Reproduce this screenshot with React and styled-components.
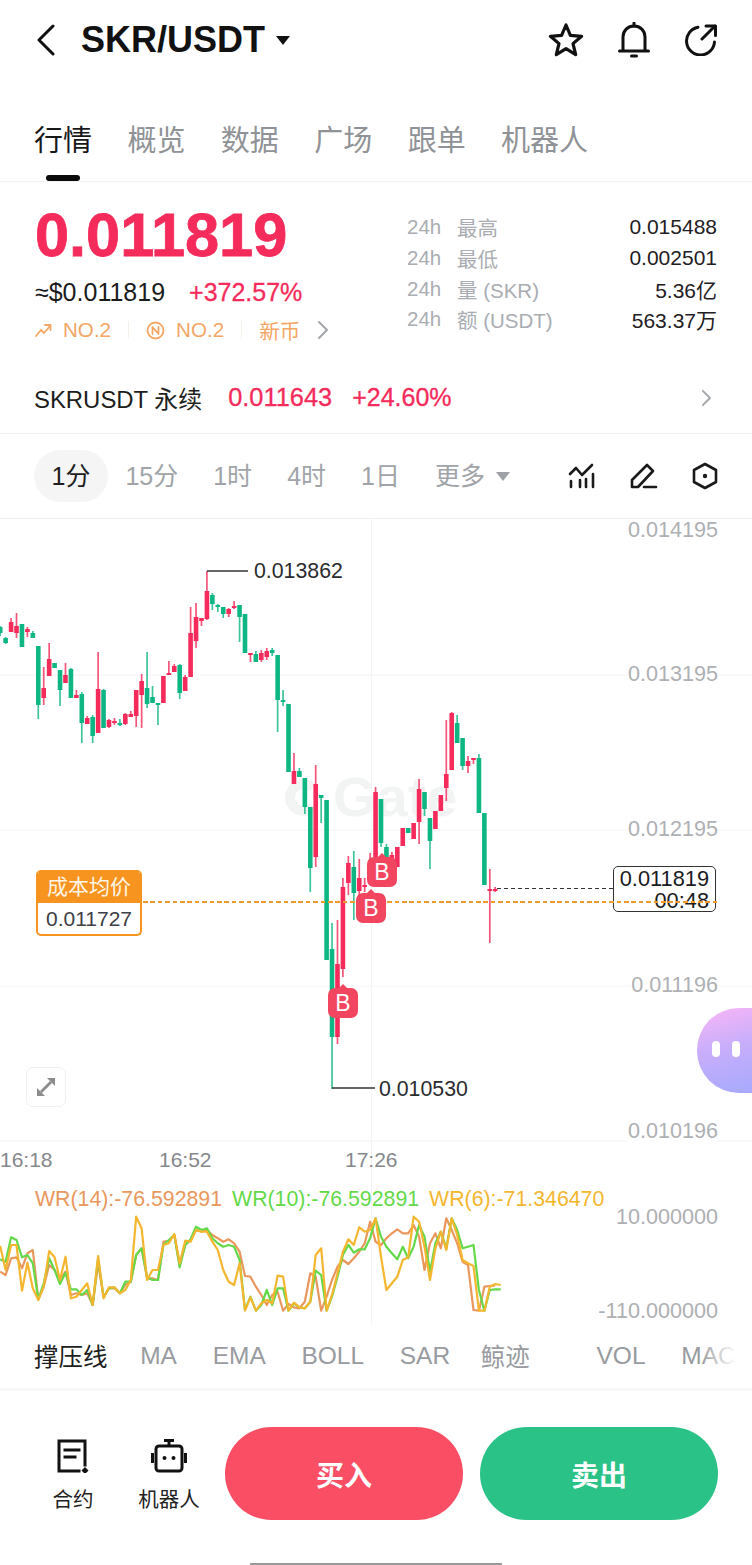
// App.jsx
import React from 'react';
import styled, { createGlobalStyle } from 'styled-components';

const FONT = '"Liberation Sans", "Noto Sans CJK SC", sans-serif';
const RED = '#f42b5b';
const GREEN = '#0db683';
const CHART_TOP = 519;

const GlobalStyle = createGlobalStyle`
  html, body {
    margin: 0;
    padding: 0;
    background: #fff;
    font-family: ${FONT};
  }
`;

const Page = styled.div`
  width: 752px;
  height: 1565px;
  overflow: hidden;
  background: #fff;
  color: #1b1b1d;
`;

/* header */
const Header = styled.header`
  height: 80px;
  display: flex;
  align-items: center;
  padding: 0 34px 0 36px;
  box-sizing: border-box;
`;

const Title = styled.h1`
  margin: 0 0 0 25px;
  font-size: 36px;
  font-weight: 700;
  line-height: 40px;
  color: #111;
`;

const TitleCaret = styled.span`
  width: 0;
  height: 0;
  margin: 0 0 0 11px;
  border-left: 7.5px solid transparent;
  border-right: 7.5px solid transparent;
  border-top: 9px solid #111;
`;

const HeaderIcons = styled.div`
  margin-left: auto;
  display: flex;
  align-items: center;
  gap: 34px;
`;

/* tabs */
const Tabs = styled.nav`
  height: 102px;
  display: flex;
  align-items: flex-start;
  gap: 35.4px;
  padding: 43px 0 0 34px;
  box-sizing: border-box;
  border-bottom: 1px solid #f2f2f2;
`;

const Tab = styled.div`
  position: relative;
  font-size: 29px;
  line-height: 36px;
  color: ${(p) => (p.$active ? '#17181a' : '#8f9296')};

  ${(p) =>
    p.$active &&
    `&::after {
      content: '';
      position: absolute;
      left: 12px;
      top: 52px;
      width: 34px;
      height: 6px;
      border-radius: 3px;
      background: #0b0b0b;
    }`}
`;

/* price summary */
const Summary = styled.section`
  height: 184px;
  display: flex;
  justify-content: space-between;
  padding: 23px 35px 0 35px;
  box-sizing: border-box;
`;

const PriceColumn = styled.div`
  display: flex;
  flex-direction: column;
`;

const Price = styled.div`
  font-size: 61.3px;
  font-weight: 700;
  line-height: 60px;
  color: ${RED};
  -webkit-text-stroke: 0.8px ${RED};
`;

const SubPrice = styled.div`
  display: flex;
  gap: 24px;
  margin-top: 12px;
  font-size: 25px;
  line-height: 30px;
`;

const Change = styled.span`
  color: ${RED};
  font-size: ${(p) => p.$size || 25}px;
  margin-left: ${(p) => p.$gap || 0}px;
  -webkit-text-stroke: 0.3px ${RED};
`;

const TagRow = styled.div`
  display: flex;
  align-items: center;
  margin-top: 8px;
  height: 30px;
  color: #f4a665;
  font-size: 20.6px;
`;

const Tag = styled.span`
  display: flex;
  align-items: center;
  gap: 11px;
`;

const TagDivider = styled.span`
  width: 1px;
  height: 18px;
  margin: 0 17px;
  background: #f6f0ea;
`;

const TagChevron = styled.span`
  display: flex;
  margin-left: 17px;
`;

const Stats = styled.div`
  width: 310px;
  margin-top: 7px;
  display: flex;
  flex-direction: column;
`;

const StatRow = styled.div`
  height: 30.7px;
  display: flex;
  align-items: center;
  font-size: 20.5px;
  color: #a9adb2;
`;

const StatSpan = styled.span`
  width: 50px;
`;

const StatValue = styled.span`
  margin-left: auto;
  color: #1f2023;
  font-size: 21px;
`;

/* perpetual row */
const PerpRow = styled.div`
  height: 68px;
  display: flex;
  align-items: center;
  padding: 0 40px 4px 34px;
  box-sizing: border-box;
  border-bottom: 1px solid #f3f3f3;
`;

const PerpName = styled.span`
  font-size: 23.9px;
  color: #1d1e20;
  margin-right: 26px;
`;

const PerpChevron = styled.span`
  margin-left: auto;
  display: flex;
`;

/* intervals */
const IntervalBar = styled.div`
  height: 85px;
  display: flex;
  align-items: center;
  padding: 0 34px;
  box-sizing: border-box;
  border-bottom: 1px solid #f0f0f0;
`;

const Interval = styled.div`
  height: 52px;
  line-height: 52px;
  padding: 0 17.5px;
  border-radius: 26px;
  font-size: 25px;
  color: ${(p) => (p.$active ? '#1d1e20' : '#a0a4a8')};
  background: ${(p) => (p.$active ? '#f5f5f5' : 'transparent')};
`;

const MoreCaret = styled.span`
  width: 0;
  height: 0;
  margin-left: -6px;
  border-left: 7px solid transparent;
  border-right: 7px solid transparent;
  border-top: 9px solid #9ea2a6;
`;

const ChartTools = styled.div`
  margin-left: auto;
  display: flex;
  align-items: center;
  gap: 34px;
`;

/* chart */
const Chart = styled.div`
  position: relative;
  isolation: isolate;
  height: 806px;
  overflow: hidden;
`;

const ChartSvg = styled.svg`
  display: block;
`;

const Watermark = styled.div`
  position: absolute;
  left: 285px;
  top: ${770 - CHART_TOP}px;
  z-index: -1;
  display: flex;
  align-items: center;
  gap: 11px;
  font-size: 56px;
  font-weight: 700;
  line-height: 54px;
  color: #f2f4f3;
`;

const WatermarkRing = styled.span`
  width: 37px;
  height: 37px;
  box-sizing: border-box;
  border: 10px solid #f2f4f3;
  border-right-color: transparent;
  border-radius: 50%;
`;

const AxisLabel = styled.span`
  position: absolute;
  right: 34px;
  top: ${(p) => p.$y - CHART_TOP - 11}px;
  font-size: 21.6px;
  line-height: 22px;
  color: #aeb0b3;
  background: ${(p) => (p.$plain ? 'transparent' : '#fff')};
`;

const TimeLabel = styled.span`
  position: absolute;
  left: ${(p) => p.$x}px;
  top: ${1160 - CHART_TOP - 12}px;
  font-size: 21px;
  line-height: 24px;
  color: #85888c;
`;

const Extreme = styled.span`
  position: absolute;
  left: ${(p) => p.$x}px;
  top: ${(p) => p.$y - CHART_TOP - 12}px;
  font-size: 21.3px;
  line-height: 24px;
  color: #2a2b2e;
`;

const WrLegend = styled.div`
  position: absolute;
  left: 35px;
  top: ${1199 - CHART_TOP - 12}px;
  display: flex;
  gap: 10px;
  font-size: 21.3px;
  line-height: 24px;
`;

const WrItem = styled.span`
  color: ${(p) => p.$color};
`;

const CostTag = styled.div`
  position: absolute;
  left: 36px;
  top: ${870 - CHART_TOP}px;
  width: 106px;
  height: 66px;
  box-sizing: border-box;
  border: 2.5px solid #f7941f;
  border-top: 0;
  border-radius: 5px;
  background: #fff;
  text-align: center;
  overflow: hidden;
`;

const CostTitle = styled.div`
  height: 33px;
  line-height: 33px;
  background: #f7941f;
  color: #fff6e8;
  font-size: 21px;
`;

const CostValue = styled.div`
  line-height: 31px;
  font-size: 21px;
  color: #3d4046;
`;

const PriceBox = styled.div`
  position: absolute;
  left: 613px;
  top: ${866 - CHART_TOP}px;
  width: 103px;
  height: 46px;
  box-sizing: border-box;
  padding: 1px 6px 0 0;
  border: 1.5px solid #333;
  border-radius: 5px;
  background: #fff;
  text-align: right;
  font-size: 21.8px;
  line-height: 22px;
  color: #1b1b1d;
`;

const CostLine = styled.div`
  position: absolute;
  left: 143px;
  width: 575px;
  top: ${901 - CHART_TOP}px;
  height: 2px;
  background: repeating-linear-gradient(to right, #f09a2e 0 4.5px, transparent 4.5px 7.4px);
`;

const Badge = styled.div`
  position: absolute;
  left: ${(p) => p.$x}px;
  top: ${(p) => p.$y - CHART_TOP}px;
  width: 30px;
  height: 30px;
  border-radius: 7px;
  background: #f2455f;
  color: #fff;
  text-align: center;
  font-size: 23px;
  line-height: 30px;

  &::before {
    content: '';
    position: absolute;
    left: 11px;
    top: -4px;
    border-left: 4px solid transparent;
    border-right: 4px solid transparent;
    border-bottom: 4px solid #f2455f;
  }
`;

const ExpandButton = styled.div`
  position: absolute;
  left: 26px;
  top: ${1067 - CHART_TOP}px;
  width: 40px;
  height: 40px;
  box-sizing: border-box;
  display: flex;
  align-items: center;
  justify-content: center;
  border: 1.5px solid #f0f0f0;
  border-radius: 7px;
  background: #fff;
`;

const Assistant = styled.div`
  position: absolute;
  left: 697px;
  top: ${1008 - CHART_TOP}px;
  width: 70px;
  height: 85px;
  border-radius: 42px 0 0 42px;
  background: linear-gradient(165deg, #fbb6f6 0%, #c8aefb 45%, #a4a9fd 100%);
  display: flex;
  gap: 12px;
  padding: 33px 0 0 15px;
  box-sizing: border-box;
`;

const AssistantEye = styled.span`
  width: 8px;
  height: 16px;
  border-radius: 4px;
  background: #fff;
`;

/* indicators */
const IndicatorBar = styled.div`
  position: relative;
  height: 66px;
  display: flex;
  align-items: center;
  gap: 35.7px;
  padding: 0 0 2px 34px;
  box-sizing: border-box;
  border-bottom: 3px solid #f8f8f8;
  overflow: hidden;

  &::after {
    content: '';
    position: absolute;
    left: 700px;
    top: 0;
    width: 52px;
    height: 100%;
    background: linear-gradient(to right, rgba(255, 255, 255, 0), #fff 70%);
  }
`;

const Indicator = styled.span`
  font-size: 24.5px;
  white-space: nowrap;
  color: ${(p) => (p.$active ? '#1d1e20' : '#989b9f')};
  margin-left: ${(p) => p.$gap || 0}px;
`;

/* bottom actions */
const ActionBar = styled.div`
  display: flex;
  padding: 36px 34px 0 38px;
`;

const Tool = styled.div`
  width: 70px;
  margin-right: 26px;
  padding-top: 12px;
  display: flex;
  flex-direction: column;
  align-items: center;
  white-space: nowrap;
  font-size: 20.5px;
  line-height: 26px;
  color: #222;

  svg {
    margin-bottom: 14px;
  }
`;

const TradeButton = styled.button`
  width: 238px;
  height: 93px;
  border: 0;
  border-radius: 47px;
  background: ${(p) => p.$color};
  color: #fff;
  font-family: ${FONT};
  font-size: 28px;
  font-weight: 700;
  margin-left: ${(p) => p.$gap || 0}px;
`;

const HomeBar = styled.div`
  width: 252px;
  height: 2px;
  margin: 43px auto 0;
  background: #999;
`;

// [colour, wick top, wick bottom, body top, body bottom] in page y
const CANDLES = [
  ['g', 626, 636, 627, 633], ['g', 637, 644, 638, 643], ['r', 618, 632, 622, 632], ['r', 613, 638, 626, 633],
  ['g', 624, 647, 624, 647], ['r', 627, 637, 629, 632], ['g', 631, 638, 633, 638], ['g', 646, 719, 646, 705],
  ['r', 667, 705, 688, 698], ['r', 643, 676, 659, 676], ['g', 663, 668, 663, 668], ['g', 670, 706, 670, 690],
  ['r', 663, 683, 675, 683], ['g', 668, 698, 669, 698], ['r', 690, 698, 695, 698], ['g', 692, 743, 694, 723],
  ['r', 716, 724, 718, 724], ['g', 715, 743, 717, 736], ['r', 652, 733, 689, 733], ['g', 689, 728, 690, 728],
  ['r', 719, 728, 720, 727], ['r', 718, 725, 721, 723], ['g', 719, 726, 723, 725], ['r', 713, 725, 714, 724],
  ['r', 711, 717, 714, 717], ['r', 690, 727, 690, 716], ['r', 674, 728, 681, 695], ['g', 652, 708, 688, 704],
  ['g', 686, 703, 697, 703], ['g', 703, 725, 703, 704], ['r', 676, 703, 676, 703], ['r', 661, 674, 673, 674],
  ['r', 664, 672, 666, 672], ['g', 664, 699, 665, 693], ['r', 675, 691, 677, 691], ['r', 607, 677, 633, 677],
  ['r', 603, 648, 617, 641], ['r', 618, 626, 618, 621], ['r', 571, 620, 591, 619], ['g', 593, 610, 595, 604],
  ['g', 604, 612, 605, 607], ['g', 607, 618, 607, 614], ['r', 608, 617, 609, 614], ['r', 601, 609, 606, 608],
  ['g', 605, 642, 605, 617], ['g', 614, 653, 614, 653], ['r', 653, 662, 653, 655], ['g', 651, 662, 654, 662],
  ['r', 650, 662, 653, 660], ['r', 648, 660, 651, 657], ['g', 648, 656, 650, 653], ['g', 655, 732, 655, 700],
  ['g', 690, 706, 700, 702], ['g', 704, 772, 704, 772], ['r', 753, 784, 771, 784], ['g', 768, 777, 771, 777],
  ['g', 778, 814, 778, 807], ['g', 807, 892, 807, 868], ['r', 765, 867, 784, 857], ['g', 795, 823, 795, 798],
  ['g', 800, 960, 800, 960], ['g', 923, 1089, 949, 1037], ['r', 920, 1044, 964, 1037], ['r', 878, 977, 887, 969],
  ['r', 856, 895, 863, 883], ['g', 851, 920, 867, 893], ['r', 859, 900, 878, 891], ['r', 878, 892, 885, 887],
  ['r', 853, 885, 875, 880], ['r', 787, 857, 792, 857], ['g', 799, 847, 799, 843], ['g', 844, 870, 847, 858],
  ['r', 852, 868, 855, 866], ['r', 847, 867, 847, 867], ['r', 828, 846, 828, 846], ['g', 828, 833, 828, 833],
  ['r', 823, 839, 823, 839], ['r', 779, 844, 789, 822], ['g', 792, 816, 792, 809], ['g', 818, 869, 818, 841],
  ['r', 811, 829, 811, 829], ['r', 795, 811, 795, 811], ['r', 720, 801, 774, 788], ['r', 712, 770, 713, 770],
  ['g', 715, 743, 723, 743], ['g', 738, 770, 738, 766], ['r', 756, 773, 761, 766], ['r', 758, 764, 758, 760],
  ['g', 754, 813, 758, 813], ['g', 813, 885, 813, 885], ['r', 869, 943, 889, 891], ['r', 887, 892, 889, 890],
];

// WR lines, y in 1/3 px above page y 1180
const WR14 = [275, 285, 235, 232, 265, 220, 210, 358, 320, 255, 270, 300, 275, 345, 340, 345, 340, 375, 250, 352, 325, 325, 340, 315, 305, 225, 205, 295, 295, 300, 185, 183, 165, 255, 195, 180, 150, 155, 150, 165, 175, 185, 178, 190, 215, 288, 290, 320, 345, 375, 345, 335, 392, 372, 382, 385, 365, 280, 290, 392, 350, 300, 260, 240, 252, 235, 215, 190, 125, 185, 195, 175, 160, 148, 160, 160, 135, 170, 270, 190, 160, 205, 115, 150, 190, 245, 255, 390, 392, 320, 318, 316];
const WR10 = [238, 245, 172, 180, 232, 225, 250, 358, 310, 235, 270, 312, 278, 328, 328, 345, 330, 375, 235, 352, 325, 322, 340, 305, 305, 225, 205, 292, 300, 300, 195, 180, 165, 262, 195, 178, 140, 150, 145, 175, 190, 200, 195, 200, 240, 390, 350, 392, 375, 330, 375, 325, 325, 392, 370, 382, 385, 365, 272, 285, 392, 350, 290, 225, 195, 218, 208, 208, 175, 115, 170, 200, 220, 238, 200, 235, 200, 135, 170, 275, 190, 155, 205, 115, 150, 205, 200, 195, 330, 392, 330, 328, 328];
const WR6 = [198, 270, 195, 195, 332, 248, 325, 360, 320, 213, 232, 300, 230, 355, 350, 330, 310, 375, 228, 355, 322, 322, 340, 330, 300, 110, 145, 300, 270, 270, 195, 190, 162, 250, 182, 185, 150, 155, 155, 185, 210, 270, 305, 315, 250, 392, 352, 392, 370, 360, 370, 287, 290, 392, 368, 382, 385, 365, 225, 205, 392, 345, 280, 215, 178, 195, 142, 155, 150, 115, 230, 330, 310, 290, 240, 232, 110, 125, 200, 300, 205, 155, 210, 115, 165, 240, 250, 258, 392, 392, 320, 312, 315];

const candleX = (i) => 0.2 + 5.44 * i;
const wrPoints = (values) => values.map((v, i) => `${candleX(i).toFixed(1)},${(1180 + v / 3).toFixed(1)}`).join(' ');

const CandleChart = () => (
  <ChartSvg width="752" height="806" viewBox={`0 ${CHART_TOP} 752 806`}>
    <g stroke="#f4f4f4" strokeWidth="1">
      <line x1="0" y1="675" x2="752" y2="675" />
      <line x1="0" y1="830" x2="752" y2="830" />
      <line x1="0" y1="986" x2="752" y2="986" />
      <line x1="0" y1="1141" x2="752" y2="1141" />
      <line x1="371.5" y1="519" x2="371.5" y2="1325" />
    </g>
    {CANDLES.map(([c, wt, wb, bt, bb], i) => {
      const x = candleX(i);
      const color = c === 'g' ? GREEN : RED;
      return (
        <g key={i}>
          <line x1={x} y1={wt} x2={x} y2={wb} stroke={color} strokeWidth="1.7" opacity="0.8" />
          <rect x={x - 2.3} y={bt} width="4.6" height={Math.max(bb - bt, 2)} fill={color} />
        </g>
      );
    })}
    <polyline points="207,571 248,571" fill="none" stroke="#333" strokeWidth="1.4" />
    <polyline points="332,1088 375,1088" fill="none" stroke="#333" strokeWidth="1.4" />
    <line x1="497" y1="888.5" x2="613" y2="888.5" stroke="#333" strokeWidth="1" strokeDasharray="4 3" />
    <polyline points={wrPoints(WR14)} fill="none" stroke="#e9975c" strokeWidth="2.2" strokeLinejoin="round" />
    <polyline points={wrPoints(WR10)} fill="none" stroke="#63d94a" strokeWidth="2.2" strokeLinejoin="round" />
    <polyline points={wrPoints(WR6)} fill="none" stroke="#f4b62f" strokeWidth="2.2" strokeLinejoin="round" />
  </ChartSvg>
);

const BackIcon = () => (
  <svg width="20" height="32" viewBox="0 0 20 32" fill="none" stroke="#111" strokeWidth="3" strokeLinecap="round" strokeLinejoin="round">
    <polyline points="17,2 3,16 17,30" />
  </svg>
);

const StarIcon = () => (
  <svg width="36" height="36" viewBox="0 0 36 36" fill="none" stroke="#111" strokeWidth="3.2" strokeLinejoin="round">
    <polygon points="18,3 22.4,13.4 33.6,14.3 25,21.6 27.7,32.6 18,26.7 8.3,32.6 11,21.6 2.4,14.3 13.6,13.4" />
  </svg>
);

const BellIcon = () => (
  <svg width="32" height="36" viewBox="0 0 32 36" fill="none" stroke="#111" strokeWidth="3" strokeLinecap="round">
    <path d="M5 28V15C5 8.5 9.8 4 16 4s11 4.5 11 11v13" />
    <path d="M1.5 29h29" />
    <path d="M16 1v3" />
    <path d="M13.5 34h5" />
  </svg>
);

const ShareIcon = () => (
  <svg width="34" height="32" viewBox="0 0 34 32" fill="none" stroke="#111" strokeWidth="3" strokeLinecap="round" strokeLinejoin="round">
    <path d="M14 3.2A14 14 0 1 0 30.5 18" />
    <path d="M18 15L31 2" />
    <path d="M22 2h9.5v9.5" />
  </svg>
);

const TrendIcon = () => (
  <svg width="17" height="15" viewBox="0 0 17 15" fill="none" stroke="#f4a665" strokeWidth="1.8" strokeLinecap="round" strokeLinejoin="round">
    <polyline points="1,13 6,7 9,10 15,3" />
    <polyline points="10,2 15.5,2 15.5,7" />
  </svg>
);

const NewIcon = () => (
  <svg width="19" height="19" viewBox="0 0 19 19" fill="none" stroke="#f4a665" strokeWidth="1.8" strokeLinecap="round" strokeLinejoin="round">
    <circle cx="9.5" cy="9.5" r="8" />
    <path d="M6.5 13V6l6 7V6" />
  </svg>
);

const Chevron = ({ color, size = 20 }) => (
  <svg width={size * 0.6} height={size} viewBox="0 0 12 20" fill="none" stroke={color} strokeWidth="2" strokeLinecap="round" strokeLinejoin="round">
    <polyline points="2,2 10,10 2,18" />
  </svg>
);

const LinesIcon = () => (
  <svg width="28" height="26" viewBox="0 0 28 26" fill="none" stroke="#1a1a1a" strokeWidth="2.6" strokeLinecap="round" strokeLinejoin="round">
    <polyline points="2,11 8,5 14,12 24,2" />
    <path d="M3 18v6M12 17v7M18 16v8M25 11v13" />
  </svg>
);

const PenIcon = () => (
  <svg width="28" height="28" viewBox="0 0 28 28" fill="none" stroke="#1a1a1a" strokeWidth="2.6" strokeLinecap="round" strokeLinejoin="round">
    <path d="M2 25V18L17 3l6 6L8 25z" />
    <path d="M14 25h12" />
  </svg>
);

const HexIcon = () => (
  <svg width="26" height="28" viewBox="0 0 26 28" fill="none" stroke="#1a1a1a" strokeWidth="2.6" strokeLinejoin="round">
    <polygon points="13,2 24,8 24,20 13,26 2,20 2,8" />
    <circle cx="13" cy="14" r="2.2" fill="#1a1a1a" stroke="none" />
  </svg>
);

const ExpandIcon = () => (
  <svg width="20" height="20" viewBox="0 0 20 20" fill="#8c8c8c" stroke="#8c8c8c" strokeWidth="2.8">
    <path d="M5 15L15 5" />
    <polygon points="11,1 19,1 19,9" stroke="none" />
    <polygon points="1,11 1,19 9,19" stroke="none" />
  </svg>
);

const ContractIcon = () => (
  <svg width="32" height="34" viewBox="0 0 32 34" fill="none" stroke="#111" strokeWidth="3" strokeLinecap="square">
    <path d="M22 32H2V2h26v24" />
    <path d="M8 11h14M8 18h10" />
    <rect x="25.5" y="29" width="5" height="5" transform="rotate(45 28 31.5)" fill="#111" stroke="none" />
  </svg>
);

const RobotIcon = () => (
  <svg width="36" height="34" viewBox="0 0 36 34" fill="none" stroke="#111" strokeWidth="3" strokeLinejoin="round">
    <rect x="5" y="7" width="26" height="25" rx="3" />
    <path d="M13 1.5h10" />
    <path d="M18 2v5" />
    <path d="M1.5 14v10M34.5 14v10" />
    <circle cx="13.5" cy="19" r="2" fill="#111" stroke="none" />
    <circle cx="22.5" cy="19" r="2" fill="#111" stroke="none" />
  </svg>
);

const App = () => {
  return (
    <Page>
      <GlobalStyle />
      <Header>
        <BackIcon />
        <Title>SKR/USDT</Title>
        <TitleCaret />
        <HeaderIcons>
          <StarIcon />
          <BellIcon />
          <ShareIcon />
        </HeaderIcons>
      </Header>

      <Tabs>
        <Tab $active>行情</Tab>
        <Tab>概览</Tab>
        <Tab>数据</Tab>
        <Tab>广场</Tab>
        <Tab>跟单</Tab>
        <Tab>机器人</Tab>
      </Tabs>

      <Summary>
        <PriceColumn>
          <Price>0.011819</Price>
          <SubPrice>
            <span>≈$0.011819</span>
            <Change>+372.57%</Change>
          </SubPrice>
          <TagRow>
            <Tag><TrendIcon />NO.2</Tag>
            <TagDivider />
            <Tag><NewIcon />NO.2</Tag>
            <TagDivider />
            <span>新币</span>
            <TagChevron><Chevron color="#a2a5a9" /></TagChevron>
          </TagRow>
        </PriceColumn>
        <Stats>
          <StatRow><StatSpan>24h</StatSpan>最高<StatValue>0.015488</StatValue></StatRow>
          <StatRow><StatSpan>24h</StatSpan>最低<StatValue>0.002501</StatValue></StatRow>
          <StatRow><StatSpan>24h</StatSpan>量 (SKR)<StatValue>5.36亿</StatValue></StatRow>
          <StatRow><StatSpan>24h</StatSpan>额 (USDT)<StatValue>563.37万</StatValue></StatRow>
        </Stats>
      </Summary>

      <PerpRow>
        <PerpName>SKRUSDT 永续</PerpName>
        <Change $size={25.4}>0.011643</Change>
        <Change $size={25} $gap={20}>+24.60%</Change>
        <PerpChevron><Chevron color="#a2a5a9" size={18} /></PerpChevron>
      </PerpRow>

      <IntervalBar>
        <Interval $active>1分</Interval>
        <Interval>15分</Interval>
        <Interval>1时</Interval>
        <Interval>4时</Interval>
        <Interval>1日</Interval>
        <Interval>更多</Interval>
        <MoreCaret />
        <ChartTools>
          <LinesIcon />
          <PenIcon />
          <HexIcon />
        </ChartTools>
      </IntervalBar>

      <Chart>
        <Watermark>
          <WatermarkRing />
          Gate
        </Watermark>
        <CandleChart />
        <AxisLabel $y={530} $plain>0.014195</AxisLabel>
        <AxisLabel $y={674}>0.013195</AxisLabel>
        <AxisLabel $y={829}>0.012195</AxisLabel>
        <AxisLabel $y={985}>0.011196</AxisLabel>
        <AxisLabel $y={1131}>0.010196</AxisLabel>
        <AxisLabel $y={1217} $plain>10.000000</AxisLabel>
        <AxisLabel $y={1311} $plain>-110.000000</AxisLabel>
        <TimeLabel $x={0}>16:18</TimeLabel>
        <TimeLabel $x={159}>16:52</TimeLabel>
        <TimeLabel $x={345}>17:26</TimeLabel>
        <Extreme $x={254} $y={571}>0.013862</Extreme>
        <Extreme $x={379} $y={1089}>0.010530</Extreme>
        <WrLegend>
          <WrItem $color="#e9975c">WR(14):-76.592891</WrItem>
          <WrItem $color="#63d94a">WR(10):-76.592891</WrItem>
          <WrItem $color="#f4b62f">WR(6):-71.346470</WrItem>
        </WrLegend>
        <CostTag>
          <CostTitle>成本均价</CostTitle>
          <CostValue>0.011727</CostValue>
        </CostTag>
        <PriceBox>
          0.011819
          <br />
          00:48
        </PriceBox>
        <CostLine />
        <Badge $x={367} $y={857}>B</Badge>
        <Badge $x={356} $y={893}>B</Badge>
        <Badge $x={328} $y={988}>B</Badge>
        <ExpandButton><ExpandIcon /></ExpandButton>
        <Assistant>
          <AssistantEye />
          <AssistantEye />
        </Assistant>
      </Chart>

      <IndicatorBar>
        <Indicator $active>撑压线</Indicator>
        <Indicator $gap={-3}>MA</Indicator>
        <Indicator>EMA</Indicator>
        <Indicator>BOLL</Indicator>
        <Indicator>SAR</Indicator>
        <Indicator $gap={-5}>鲸迹</Indicator>
        <Indicator $gap={31}>VOL</Indicator>
        <Indicator>MACD</Indicator>
      </IndicatorBar>

      <ActionBar>
        <Tool><ContractIcon />合约</Tool>
        <Tool><RobotIcon />机器人</Tool>
        <TradeButton $color="#f94e64" $gap={-5}>买入</TradeButton>
        <TradeButton $color="#2bc287" $gap={17}>卖出</TradeButton>
      </ActionBar>
      <HomeBar />
    </Page>
  );
};

export default App;
